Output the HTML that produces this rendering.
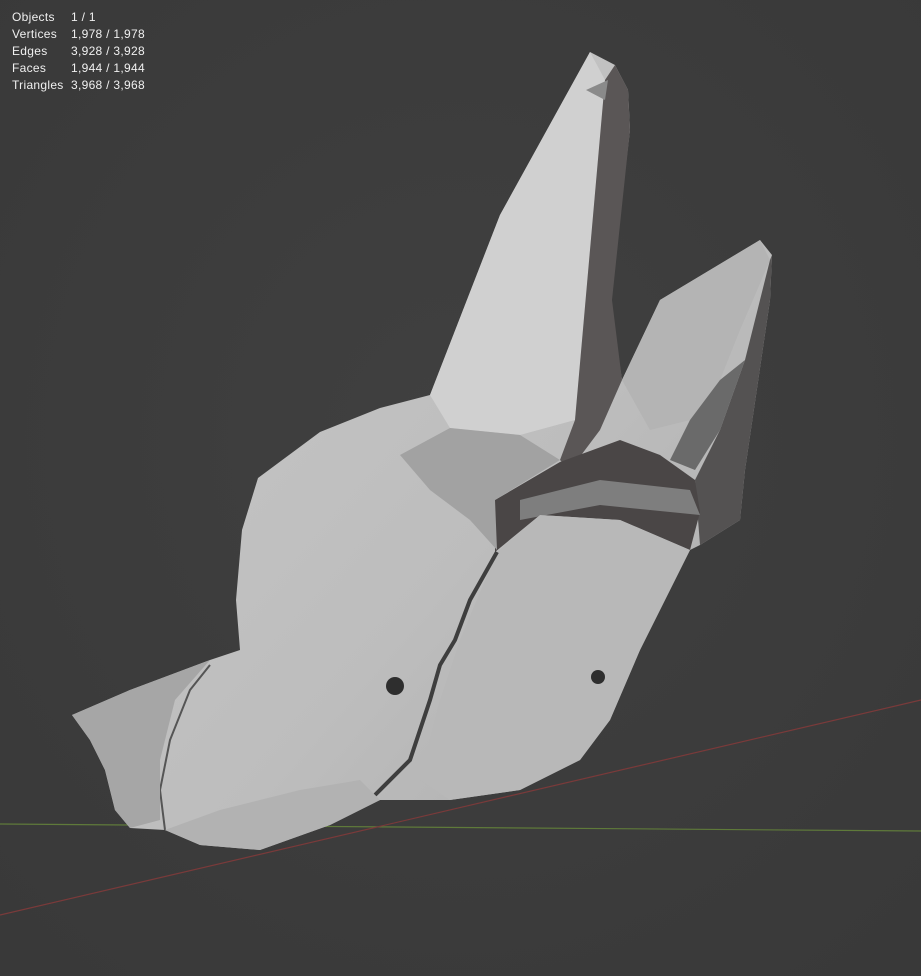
<!DOCTYPE html>
<html><head><style>
html,body{margin:0;padding:0;background:#3d3d3d;width:921px;height:976px;overflow:hidden;}
.stats{position:absolute;left:12px;top:9px;font-family:"Liberation Sans",sans-serif;font-size:12px;letter-spacing:0.3px;color:#f0f0f0;line-height:17px;}
.stats div span{display:inline-block;width:59px;}
svg{position:absolute;left:0;top:0;}
</style></head><body>
<svg width="921" height="976" viewBox="0 0 921 976">
<defs>
<radialGradient id="bg" cx="50%" cy="45%" r="70%"><stop offset="0" stop-color="#404040"/><stop offset="1" stop-color="#393939"/></radialGradient>
<linearGradient id="head" x1="0" y1="0" x2="1" y2="1"><stop offset="0" stop-color="#c9c9c9"/><stop offset="0.6" stop-color="#bdbdbd"/><stop offset="1" stop-color="#a9a9a9"/></linearGradient>
</defs>
<rect width="921" height="976" fill="url(#bg)"/>
<line x1="0" y1="824" x2="921" y2="831" stroke="#5f7a3a" stroke-width="1.2"/>
<line x1="0" y1="915" x2="921" y2="700" stroke="#7a3a3a" stroke-width="1.2"/>
<polygon fill="url(#head)" points="430,395 500,215 590,52 615,65 628,90 630,130 610,300 622,380 660,300 760,240 772,255 770,300 745,470 740,520 700,545 690,550 640,650 610,720 580,760 520,790 450,800 380,800 330,825 260,850 200,845 165,830 130,828 115,810 105,770 90,740 72,715 130,690 210,660 240,650 236,600 242,530 258,478 320,432 380,408"/>
<polygon fill="#d0d0d0" points="430,395 500,215 590,52 605,80 590,250 575,420 520,435 450,428"/>
<polygon fill="#5a5656" points="605,80 615,65 628,90 630,130 612,300 622,380 600,430 570,470 560,460 575,420 590,250"/>
<polygon fill="#8a8a8a" points="586,90 608,80 605,100"/>
<polygon fill="#b4b4b4" points="622,380 660,300 760,240 770,260 740,330 720,380 690,420 650,430"/>
<polygon fill="#545252" points="770,260 772,255 770,300 745,470 740,520 700,545 695,480 720,430 745,360"/>
<polygon fill="#6a6a6a" points="720,380 745,360 720,430 695,470 670,460 690,420"/>
<polygon fill="#4a4646" points="495,500 560,462 620,440 660,455 695,480 700,512 690,550 620,520 540,515 495,552"/>
<polygon fill="#7e7e7e" points="520,500 600,480 690,490 700,515 600,505 520,520"/>
<polygon fill="#a2a2a2" points="400,455 450,428 520,435 560,460 495,500 497,550 470,520 430,490"/>
<polygon fill="#b8b8b8" points="497,552 540,515 620,520 690,550 640,650 610,720 580,760 520,790 450,800 420,780 440,700 460,640"/>
<polyline fill="none" stroke="#3e3e3e" stroke-width="4" points="497,552 470,600 455,640 440,665 430,700 410,760 375,795"/>
<polyline fill="none" stroke="#555" stroke-width="2" points="210,665 190,690 170,740 160,790 165,830"/>
<polygon fill="#a6a6a6" points="72,715 130,690 210,660 175,700 160,760 160,820 130,828 115,810 105,770 90,740"/>
<polygon fill="#b2b2b2" points="165,830 200,845 260,850 330,825 380,800 360,780 300,790 220,810"/>
<circle cx="395" cy="686" r="9" fill="#2e2e2e"/>
<circle cx="598" cy="677" r="7" fill="#2e2e2e"/>
</svg>
<div class="stats">
<div><span>Objects</span>1 / 1</div>
<div><span>Vertices</span>1,978 / 1,978</div>
<div><span>Edges</span>3,928 / 3,928</div>
<div><span>Faces</span>1,944 / 1,944</div>
<div><span>Triangles</span>3,968 / 3,968</div>
</div>
</body></html>
